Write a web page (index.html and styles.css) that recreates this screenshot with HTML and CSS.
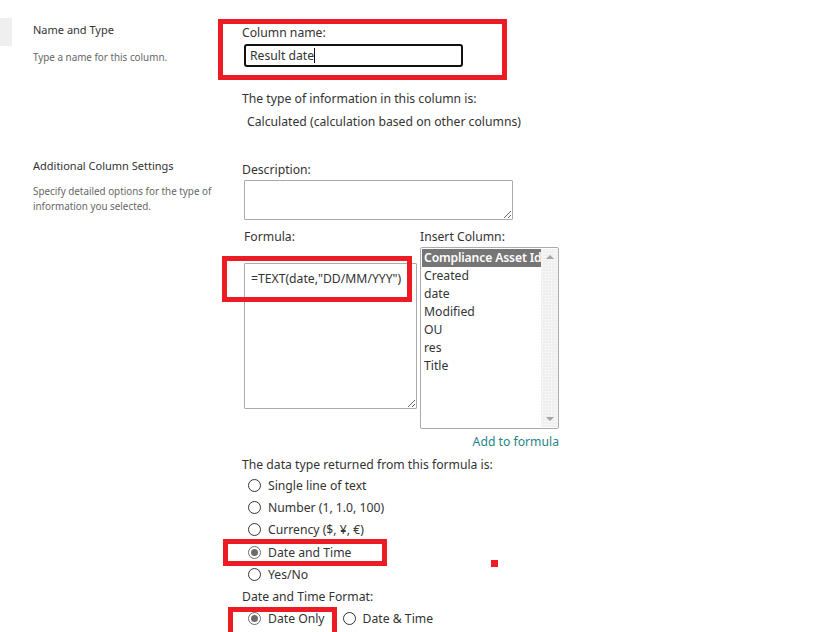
FILE: index.html
```html
<!DOCTYPE html>
<html>
<head>
<meta charset="utf-8">
<link rel="stylesheet" href="styles.css">
</head>
<body>
<div class="page">
  <div class="stub"></div>
  <div class="main">
    <section class="sec sec1">
      <div class="side">
        <div class="side-title">Name and Type</div>
        <div class="side-desc">Type a name for this column.</div>
      </div>
      <div class="fields">
        <div class="lbl">Column name:</div>
        <div class="input"><span class="val">Result date</span><span class="caret"></span></div>
        <div class="lbl type-lbl">The type of information in this column is:</div>
        <div class="lbl calc">Calculated (calculation based on other columns)</div>
      </div>
    </section>
    <section class="sec sec2">
      <div class="side">
        <div class="side-title">Additional Column Settings</div>
        <div class="side-desc">Specify detailed options for the type of information you selected.</div>
      </div>
      <div class="fields">
        <div class="lbl">Description:</div>
        <textarea class="desc"></textarea>
        <div class="formula-grid">
          <div class="formula-col">
            <div class="lbl">Formula:</div>
            <textarea class="formula">=TEXT(date,"DD/MM/YYY")</textarea>
          </div>
          <div class="insert-col">
            <div class="lbl">Insert Column:</div>
            <div class="listbox">
              <div class="items">
                <div class="item sel">Compliance Asset Id</div>
                <div class="item">Created</div>
                <div class="item">date</div>
                <div class="item">Modified</div>
                <div class="item">OU</div>
                <div class="item">res</div>
                <div class="item">Title</div>
              </div>
              <div class="scroll">
                <span class="arr up"></span>
                <span class="arr down"></span>
              </div>
            </div>
            <div class="add">Add to formula</div>
          </div>
        </div>
        <div class="lbl dt-lbl">The data type returned from this formula is:</div>
        <div class="radios">
          <div class="radio"><span class="rb"></span>Single line of text</div>
          <div class="radio"><span class="rb"></span>Number (1, 1.0, 100)</div>
          <div class="radio"><span class="rb"></span>Currency ($, ¥, €)</div>
          <div class="radio"><span class="rb on"></span>Date and Time</div>
          <div class="radio"><span class="rb"></span>Yes/No</div>
        </div>
        <div class="lbl fmt-lbl">Date and Time Format:</div>
        <div class="radio-row">
          <div class="radio"><span class="rb on"></span>Date Only</div>
          <div class="radio"><span class="rb"></span>Date &amp; Time</div>
        </div>
      </div>
    </section>
  </div>
  <div class="mark m1"></div>
  <div class="mark m2"></div>
  <div class="mark m3"></div>
  <div class="mark m4"></div>
  <div class="dot"></div>
</div>
</body>
</html>
```

FILE: styles.css
```css
* { box-sizing: border-box; }
html, body { margin: 0; padding: 0; background: #fff; }
body {
  font-family: "Noto Sans", "Open Sans", sans-serif;
  color: #333;
  width: 828px;
  height: 632px;
  overflow: hidden;
}
.page {
  position: relative;
  display: flex;
  width: 828px;
  height: 632px;
}
.stub {
  width: 12px;
  height: 28px;
  margin-top: 18px;
  background: #efefef;
  flex: none;
}
.main {
  margin-left: 21px;
  display: flex;
  flex-direction: column;
}
.sec {
  display: grid;
  grid-template-columns: 209px 330px;
}
.sec1 { padding-top: 21px; }
.sec2 { margin-top: 27px; }
.side-title {
  font-size: 11px;
  line-height: 18px;
  color: #333;
}
.side-desc {
  font-size: 9.85px;
  line-height: 14.5px;
  color: #666;
  margin-top: 11px;
  width: 186px;
}
.sec2 .side-desc { margin-top: 9px; }
.sec2 .side-title { margin-top: -1px; }
.lbl {
  font-size: 12.2px;
  line-height: 18px;
  color: #333;
  white-space: nowrap;
}
.sec1 .fields { padding-top: 3px; }
.input {
  margin-top: 2px;
  margin-left: 2px;
  width: 219px;
  height: 23px;
  border: 2px solid #111;
  border-radius: 3px;
  font-size: 12.2px;
  line-height: 19px;
  padding-left: 4px;
  display: flex;
  align-items: center;
}
.caret {
  width: 1px;
  height: 15px;
  background: #111;
}
.type-lbl { margin-top: 23px; }
.calc { margin-top: 5px; padding-left: 5px; }
.sec2 .fields { padding-top: 3px; }
textarea {
  display: block;
  font-family: inherit;
  font-size: 12.2px;
  color: #333;
  border: 1px solid #ababab;
  border-radius: 1px;
  margin: 0;
  outline: none;
}
.desc {
  margin-top: 1px;
  margin-left: 2px;
  width: 269px;
  height: 40px;
  resize: vertical;
}
.formula-grid {
  display: flex;
  gap: 3px;
  margin-top: 8px;
  margin-left: 2px;
}
.formula-col { width: 173px; }
.formula {
  margin-top: 17px;
  width: 173px;
  height: 146px;
  padding: 6px 2px 6px 6px;
  line-height: 18px;
  resize: vertical;
}
.insert-col { width: 139px; }
.listbox {
  margin-top: 1px;
  width: 139px;
  height: 182px;
  border: 1px solid #ababab;
  border-radius: 2px;
  display: flex;
  padding: 1px 0 1px 1px;
}
.items { flex: 1; overflow: hidden; }
.item {
  font-size: 12.2px;
  line-height: 18px;
  height: 18px;
  padding-left: 2px;
  white-space: nowrap;
  color: #333;
}
.item.sel {
  background: #767676;
  color: #fff;
  font-weight: 600;
  letter-spacing: -0.15px;
  overflow: hidden;
}
.scroll {
  width: 17px;
  background-color: #f0f0f0;
  background-image: radial-gradient(#fff 0.6px, transparent 0.7px);
  background-size: 3px 3px;
  display: flex;
  flex-direction: column;
  justify-content: space-between;
  align-items: center;
  padding: 6px 0 6px;
}
.arr {
  width: 0;
  height: 0;
  border-left: 4px solid transparent;
  border-right: 4px solid transparent;
}
.arr.up { border-bottom: 4px solid #a3a3a3; }
.arr.down { border-top: 4px solid #a3a3a3; }
.add {
  text-align: right;
  font-size: 12.2px;
  line-height: 18px;
  color: #1f8585;
  margin-top: 4px;
  white-space: nowrap;
}
.dt-lbl { margin-top: 5px; }
.radios { margin-left: 6px; margin-top: 0; }
.radio {
  display: flex;
  align-items: center;
  height: 22.3px;
  font-size: 12.2px;
  color: #333;
  white-space: nowrap;
}
.rb {
  width: 13px;
  height: 13px;
  border: 1px solid #333;
  border-radius: 50%;
  margin-right: 7px;
  flex: none;
  position: relative;
}
.rb.on { border-color: #6b6b6b; }
.rb.on::after {
  content: "";
  position: absolute;
  left: 2px;
  top: 2px;
  width: 7px;
  height: 7px;
  border-radius: 50%;
  background: #6b6b6b;
}
.fmt-lbl { margin-top: 3px; }
.radio-row {
  display: flex;
  gap: 18px;
  margin-left: 6px;
  margin-top: 1px;
}
.mark {
  position: absolute;
  border: 5px solid #ed1c24;
}
.m1 { left: 218px; top: 19px; width: 289px; height: 61px; }
.m2 { left: 222px; top: 256px; width: 190px; height: 46px; }
.m3 { left: 223px; top: 539px; width: 164px; height: 27px; }
.m4 { left: 228px; top: 607px; width: 109px; height: 30px; }
.dot {
  position: absolute;
  left: 491px;
  top: 560px;
  width: 7px;
  height: 7px;
  background: #ed1c24;
}
```
